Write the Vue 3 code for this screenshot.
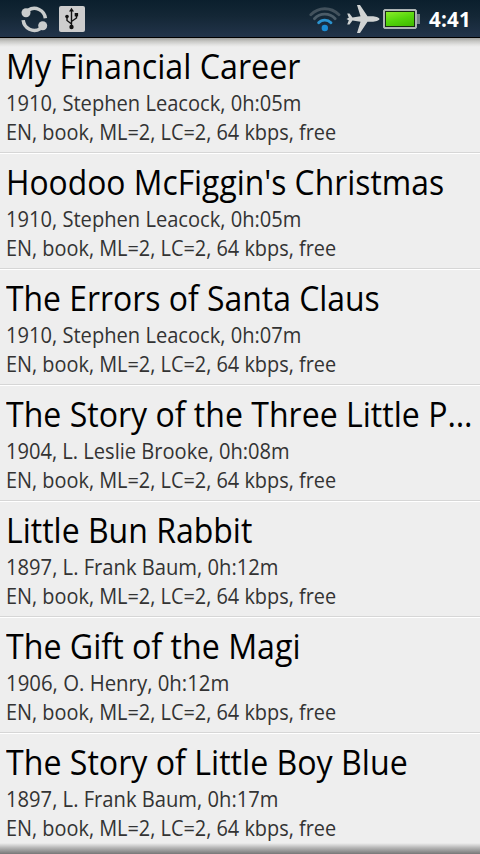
<script setup>
const books = [
  { title: 'My Financial Career', titleFit: 0.948, info: '1910, Stephen Leacock, 0h:05m', infoFit: 0.914 },
  { title: "Hoodoo McFiggin's Christmas", titleFit: 0.936, info: '1910, Stephen Leacock, 0h:05m', infoFit: 0.914 },
  { title: 'The Errors of Santa Claus', titleFit: 0.938, info: '1910, Stephen Leacock, 0h:07m', infoFit: 0.914 },
  { title: 'The Story of the Three Little P…', titleFit: 0.943, info: '1904, L. Leslie Brooke, 0h:08m', infoFit: 0.913 },
  { title: 'Little Bun Rabbit', titleFit: 0.941, info: '1897, L. Frank Baum, 0h:12m', infoFit: 0.917 },
  { title: 'The Gift of the Magi', titleFit: 0.946, info: '1906, O. Henry, 0h:12m', infoFit: 0.926 },
  { title: 'The Story of Little Boy Blue', titleFit: 0.945, info: '1897, L. Frank Baum, 0h:17m', infoFit: 0.917 },
]
const details = 'EN, book, ML=2, LC=2, 64 kbps, free'
const fit = (x) => ({ transform: `scaleX(${x})` })
</script>

<template>
  <div class="screen">
    <header class="status">
      <svg class="sync" width="30" height="30" viewBox="0 0 30 30">
        <g fill="none" stroke="#c9cccc" stroke-width="3.5">
          <path d="M8.200 7.200A11.200 11.200 0 0 1 25.400 15.300" />
          <path d="M3.200 17.200A11.200 11.200 0 0 0 20.400 25.600" />
        </g>
        <circle cx="6" cy="9.800" r="4.500" fill="#c9cccc" />
        <circle cx="22.700" cy="22.700" r="4.500" fill="#c9cccc" />
      </svg>
      <svg class="usb" width="26" height="26" viewBox="0 0 26 26">
        <rect width="26" height="26" rx="2" fill="#cdcdcd" />
        <g fill="none" stroke="#111" stroke-width="1.400">
          <path d="M12.500 4V21M12.500 18L8 14.500V10.500M12.500 15.500L17.500 12V8" />
        </g>
        <path d="M12.500 1.800L15 5.500H10Z" fill="#111" />
        <circle cx="12.500" cy="21" r="2.200" fill="#111" />
        <circle cx="8" cy="10.500" r="1.800" fill="#111" />
        <rect x="15.700" y="7" width="3.400" height="3.400" fill="#111" />
      </svg>
      <span class="gap"></span>
      <svg class="wifi" width="32" height="26" viewBox="0 0 32 26">
        <g fill="none" stroke-width="2.800" stroke-linecap="round">
          <path d="M1.800 8.800C9.500 .7 22 .7 30 8.800" stroke="#42515c" />
          <path d="M5.400 12.800C11 6.600 20.500 6.600 26.200 12.800" stroke="#4b5c68" />
          <path d="M9.600 16.800C13 13.200 18.500 13.200 22 16.800" stroke="#2b93cf" />
        </g>
        <circle cx="15.800" cy="22" r="3.200" fill="#1b8bd2" />
      </svg>
      <svg class="plane" width="34" height="30" viewBox="0 0 34 30">
        <path fill="#d0d3d3" d="M33.500 15C33.500 16.500 29 17.800 26 17.800H21.500L14 29H11L14.500 17.700L6.500 16.600L3.500 20.500H1.200L2.800 16.200L.5 15L2.800 13.800L1.200 9.500H3.500L6.500 13.400L14.500 12.300L11 1H14L21.500 12.200H26C29 12.200 33.500 13.500 33.500 15Z" />
      </svg>
      <span class="battery"><span class="charge"></span></span>
      <span class="nub"></span>
      <time class="clock">4:41</time>
    </header>
    <main class="list">
      <article v-for="book in books" :key="book.title" class="row">
        <h2 class="title" :style="fit(book.titleFit)">{{ book.title }}</h2>
        <p class="line" :style="fit(book.infoFit)">{{ book.info }}</p>
        <p class="line details">{{ details }}</p>
      </article>
      <div class="shade top"></div>
      <div class="shade bottom"></div>
    </main>
  </div>
</template>

<style>
body {
  margin: 0;
  overflow: hidden;
}
</style>

<style scoped>
.screen {
  width: 480px;
  height: 854px;
  display: flex;
  flex-direction: column;
  overflow: hidden;
  background: #eee;
  font-family: "Open Sans", "Noto Sans", sans-serif;
}
.status {
  flex: none;
  box-sizing: border-box;
  height: 38px;
  display: flex;
  align-items: flex-start;
  border-bottom: 1px solid #000;
  background: linear-gradient(#0b1f2d, #142736 45%, #22344a);
}
.status > * {
  flex: none;
}
.sync {
  margin: 3px 0 0 20px;
}
.usb {
  margin: 6px 0 0 9px;
}
.status .gap {
  flex: 1;
}
.wifi {
  margin: 6px 5px 0 0;
}
.plane {
  margin: 4px 3px 0 0;
}
.battery {
  box-sizing: border-box;
  width: 34px;
  height: 20px;
  margin-top: 9px;
  padding: 1px;
  border: 1px solid #aeb5b5;
  border-radius: 2px;
  background: #aeb5b5;
}
.charge {
  display: block;
  box-sizing: border-box;
  height: 100%;
  border: 1px solid #172b12;
  background: linear-gradient(165deg, #8aec2a, #55d60c 50%, #3fb800);
}
.nub {
  width: 3px;
  height: 10px;
  margin-top: 14px;
  background: #78838a;
}
.clock {
  width: 51px;
  margin-left: 9px;
  line-height: 39px;
  font-size: 20.5px;
  letter-spacing: 0.2px;
  font-weight: 700;
  color: #fff;
}
.list {
  position: relative;
  flex: 1;
  overflow: hidden;
}
.row {
  box-sizing: border-box;
  height: 116px;
  padding: 6px 6px 0;
  border-bottom: 1px solid #fff;
  box-shadow: inset 0 -1px #d6d6d6;
}
.row:last-of-type {
  border-bottom: 0;
  box-shadow: none;
}
.title,
.line {
  width: max-content;
  margin: 0;
  font-weight: 400;
  white-space: nowrap;
  transform-origin: 0 50%;
}
.title {
  height: 44px;
  line-height: 44px;
  font-size: 34px;
  color: #000;
}
.line {
  height: 29px;
  line-height: 29px;
  font-size: 22px;
  color: #333;
}
.details {
  transform: scaleX(0.904);
}
.shade {
  position: absolute;
  left: 0;
  right: 0;
}
.top {
  top: 0;
  height: 9px;
  background: linear-gradient(#a2a29e, #c6c6c3 35%, #e2e2e1 75%, #eee);
}
.bottom {
  bottom: 0;
  height: 11px;
  background: linear-gradient(#eeeeee, #b4b4b4 45%, #777);
}
</style>
